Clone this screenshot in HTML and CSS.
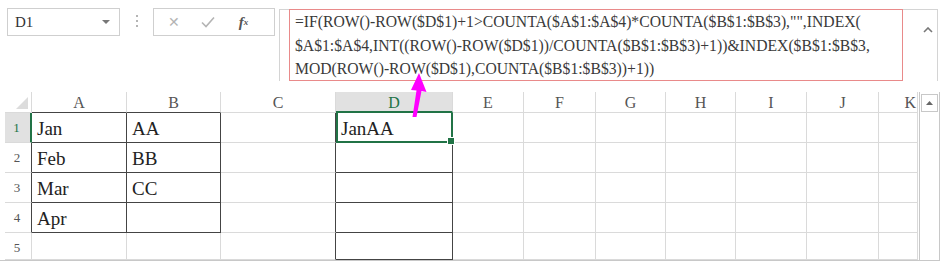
FILE: index.html
```html
<!DOCTYPE html>
<html lang="en">
<head>
    <meta charset="UTF-8">
    <title>Formula</title>
    <link rel="stylesheet" href="styles.css">
</head>
<body>
    <div class="toolbar">
        <div class="namebox">
            <span>D1</span>
            <span class="caret-down"></span>
        </div>
        <div class="dots"><i></i><i></i><i></i></div>
        <div class="fxbox">
            <span class="fx-btn cancel">&#x2715;</span>
            <span class="fx-btn ok">
                <svg width="16" height="14" viewBox="0 0 16 14"><path d="M2 7.5 L6 11.5 L14 2.5" fill="none" stroke="#b4b4b4" stroke-width="1.6"/></svg>
            </span>
            <span class="fx-btn fx"><i>f</i><sub>x</sub></span>
        </div>
        <div class="formula">
            <div class="formula-text">=IF(ROW()-ROW($D$1)+1&gt;COUNTA($A$1:$A$4)*COUNTA($B$1:$B$3),"",INDEX(<br>$A$1:$A$4,INT((ROW()-ROW($D$1))/COUNTA($B$1:$B$3)+1))&amp;INDEX($B$1:$B$3,<br>MOD(ROW()-ROW($D$1),COUNTA($B$1:$B$3))+1))</div>
            <span class="caret-up">
                <svg width="10" height="6" viewBox="0 0 10 6"><path d="M1 5 L5 1 L9 5" fill="none" stroke="#777" stroke-width="1.6"/></svg>
            </span>
        </div>
    </div>

    <div class="sheet">
        <div class="grid">
            <div class="corner"></div>
            <div class="colhead">A</div>
            <div class="colhead">B</div>
            <div class="colhead">C</div>
            <div class="colhead active">D</div>
            <div class="colhead">E</div>
            <div class="colhead">F</div>
            <div class="colhead">G</div>
            <div class="colhead">H</div>
            <div class="colhead">I</div>
            <div class="colhead">J</div>
            <div class="colhead k">K</div>

            <div class="rowhead active">1</div>
            <div class="cell box">Jan</div>
            <div class="cell box">AA</div>
            <div class="cell before-d"></div>
            <div class="cell sel">JanAA<span class="handle"></span></div>
            <div class="cell"></div><div class="cell"></div><div class="cell"></div><div class="cell"></div><div class="cell"></div><div class="cell"></div><div class="cell"></div>

            <div class="rowhead dark">2</div>
            <div class="cell box">Feb</div>
            <div class="cell box">BB</div>
            <div class="cell before-d"></div>
            <div class="cell box"></div>
            <div class="cell"></div><div class="cell"></div><div class="cell"></div><div class="cell"></div><div class="cell"></div><div class="cell"></div><div class="cell"></div>

            <div class="rowhead dark">3</div>
            <div class="cell box">Mar</div>
            <div class="cell box">CC</div>
            <div class="cell before-d"></div>
            <div class="cell box"></div>
            <div class="cell"></div><div class="cell"></div><div class="cell"></div><div class="cell"></div><div class="cell"></div><div class="cell"></div><div class="cell"></div>

            <div class="rowhead dark">4</div>
            <div class="cell box">Apr</div>
            <div class="cell box"></div>
            <div class="cell before-d"></div>
            <div class="cell box"></div>
            <div class="cell"></div><div class="cell"></div><div class="cell"></div><div class="cell"></div><div class="cell"></div><div class="cell"></div><div class="cell"></div>

            <div class="rowhead">5</div>
            <div class="cell"></div>
            <div class="cell"></div>
            <div class="cell before-d"></div>
            <div class="cell box"></div>
            <div class="cell"></div><div class="cell"></div><div class="cell"></div><div class="cell"></div><div class="cell"></div><div class="cell"></div><div class="cell"></div>
        </div>
        <div class="scrollbar">
            <div class="scroll-up">
                <svg width="7" height="4" viewBox="0 0 7 4"><path d="M0 4 L3.5 0 L7 4 Z" fill="#666"/></svg>
            </div>
        </div>
    </div>

    <svg class="arrow" width="24" height="48" viewBox="0 0 24 48">
        <path d="M15 0 L22.5 19 L17.5 18 L12.5 44 L8.5 44 L12.5 17.5 L7 17 Z" fill="#ff00ff"/>
    </svg>
</body>
</html>
```

FILE: styles.css
```css
body {
    margin: 0;
    width: 945px;
    height: 265px;
    overflow: hidden;
    background: #fff;
    font-family: "Liberation Serif", "Times New Roman", serif;
    color: #222;
    position: relative;
}
.toolbar {
    display: flex;
    align-items: flex-start;
    height: 81px;
    padding-left: 7px;
}
.namebox {
    box-sizing: border-box;
    width: 113px;
    height: 28px;
    margin-top: 8px;
    border: 1px solid #cfcfcf;
    display: flex;
    align-items: center;
    justify-content: space-between;
    padding: 0 9px 0 7px;
    font-size: 15px;
    color: #333;
}
.caret-down {
    width: 0;
    height: 0;
    border-left: 4px solid transparent;
    border-right: 4px solid transparent;
    border-top: 4px solid #777;
}
.dots {
    width: 33px;
    display: flex;
    flex-direction: column;
    align-items: center;
    gap: 3px;
    margin-top: 15px;
}
.dots i {
    width: 2px;
    height: 2px;
    background: #b5b5b5;
}
.fxbox {
    box-sizing: border-box;
    width: 122px;
    height: 28px;
    margin-top: 8px;
    border: 1px solid #cfcfcf;
    display: flex;
    align-items: center;
    padding-left: 14px;
    gap: 20px;
}
.fx-btn {
    color: #b4b4b4;
    font-family: "DejaVu Sans", sans-serif;
    font-size: 14px;
    display: flex;
    align-items: center;
}
.fx-btn.fx {
    color: #555;
    font-family: "Liberation Serif", serif;
    font-size: 15px;
    font-weight: bold;
    margin-left: 3px;
}
.fx-btn.fx sub {
    font-size: 9px;
    font-style: italic;
    vertical-align: -2px;
}
.formula {
    box-sizing: border-box;
    width: 659px;
    height: 72px;
    margin-top: 9px;
    margin-left: 4px;
    border: 1px solid #d4d4d4;
    border-bottom: none;
    padding-left: 9px;
    display: flex;
    align-items: stretch;
}
.formula-text {
    box-sizing: border-box;
    width: 614px;
    border: 1px solid #e98a8a;
    margin-top: -1px;
    padding: 0 0 0 5px;
    font-size: 15.7px;
    line-height: 23.5px;
    color: #3a3a3a;
    white-space: nowrap;
}
.caret-up {
    margin-left: 20px;
    margin-top: 9px;
}
.sheet {
    display: flex;
    margin-top: 11px;
    border-bottom: 1px solid #c8c8c8;
    width: 940px;
}
.grid {
    display: grid;
    grid-template-columns: 27px 95px 94px 115px 117px 71px 72px 70px 70px 71px 72px 39px;
    grid-template-rows: 21px 30px 30px 30px 30px 27px;
    margin-left: 5px;
}
.grid > div {
    box-sizing: border-box;
    border-right: 1px solid #dadada;
    border-bottom: 1px solid #dadada;
}
.corner {
    position: relative;
    background: #fff;
}
.corner::after {
    content: "";
    position: absolute;
    right: 3px;
    bottom: 3px;
    border-left: 12px solid transparent;
    border-bottom: 12px solid #dcdcdc;
}
.colhead {
    text-align: center;
    font-size: 16px;
    line-height: 21px;
    color: #555;
}
.colhead.active {
    background: #e1e1e1;
    color: #217346;
}
.grid > .colhead.active {
    border-bottom: 2px solid #217346;
}
.grid > .colhead:nth-child(2),
.grid > .colhead:nth-child(3) {
    border-bottom-color: #444;
}
.grid > .colhead.k {
    text-align: right;
    padding-right: 1px;
}
.rowhead {
    font-size: 13px;
    color: #555;
    text-align: center;
    line-height: 30px;
    padding-right: 2px;
}
.rowhead.active {
    background: #e1e1e1;
    color: #217346;
}
.grid > .rowhead.active {
    border-right: 2px solid #217346;
}
.grid > .rowhead.dark {
    border-right-color: #444;
}
.cell {
    font-size: 19px;
    line-height: 31px;
    padding-left: 5px;
    color: #222;
}
.grid > .cell.box {
    border-right-color: #444;
    border-bottom-color: #444;
}
.grid > .cell.before-d {
    border-right-color: #444;
}
.cell.sel {
    position: relative;
}
.grid > .cell.sel {
    border-right: 2px solid #217346;
    border-bottom: 2px solid #217346;
    box-shadow: inset 2px 0 0 #217346;
}
.handle {
    position: absolute;
    right: -4px;
    bottom: -4px;
    width: 6px;
    height: 6px;
    background: #217346;
    border: 1px solid #fff;
}
.scrollbar {
    box-sizing: border-box;
    width: 21px;
    border-left: 1px solid #c8c8c8;
    border-right: 1px solid #c8c8c8;
    margin-left: 1px;
}
.scroll-up {
    box-sizing: border-box;
    height: 18px;
    margin: 2px 1px 0;
    border: 1px solid #c8c8c8;
    display: flex;
    align-items: center;
    justify-content: center;
}
.arrow {
    position: absolute;
    left: 404px;
    top: 73px;
}
```
